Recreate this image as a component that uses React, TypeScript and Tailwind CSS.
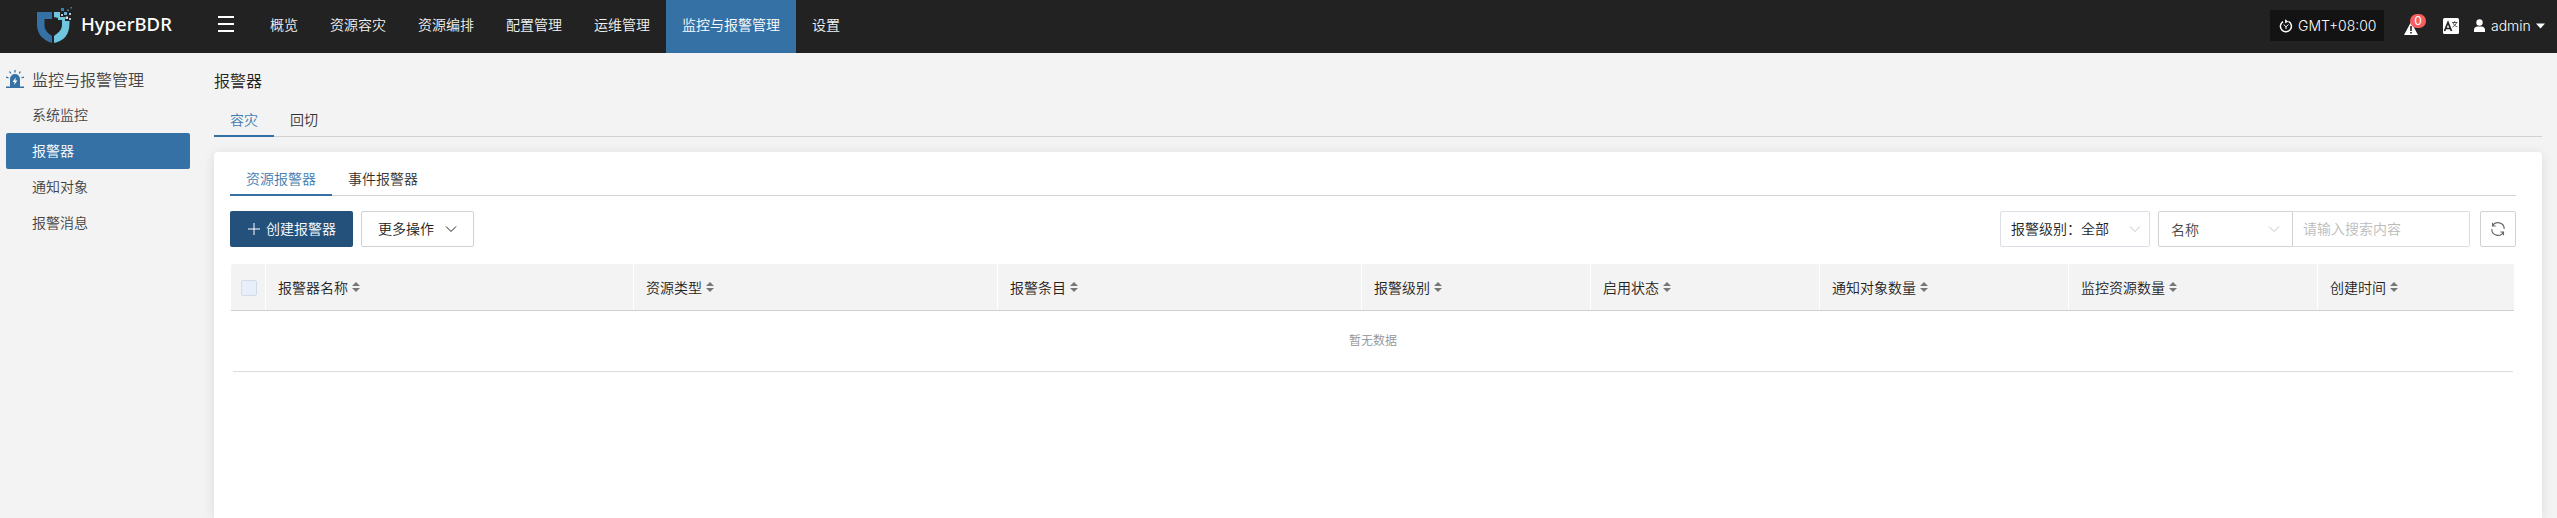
const NAV = ['概览', '资源容灾', '资源编排', '配置管理', '运维管理', '监控与报警管理', '设置'];
const SIDE = ['系统监控', '报警器', '通知对象', '报警消息'];

function Logo() {
  return (
    <svg width="36" height="38" viewBox="0 0 36 38" className="block shrink-0">
      <path d="M1 6h15v7H8.500v6c0 5 3 8 7.500 11v7C6 34 1 27 1 19z" fill="#3671a5" />
      <path d="M18 6h6v5h5v4h4.500v2c0 11-5 18-15.500 20v-7c4-3 8-6 8-11v-5h-4v-2l-4-1z" fill="#6ec7de" />
      <path d="M25 2h3v3h-3zM34.500 1h1.500v1.500h-1.500zM31 3.500h2V5h-2z" fill="#3f7fb5" />
      <path d="M28 6h3v3h-3z" fill="#6db3d8" />
      <path d="M33 7h2v2h-2zM33 12h2v2h-2zM25 8h2v2h-2z" fill="#a9cbe0" />
      <path d="M29.500 10.500h2.500v2.500h-2.500z" fill="#d8e6ef" />
    </svg>
  );
}

function Siren() {
  return (
    <svg width="18" height="18" viewBox="0 0 18 18" className="-mt-0.5 block shrink-0">
      <path d="M0 16.500h18v1.500H0zM4 16.500V9a5 5 0 0 1 10 0v7.500z" fill="#3671a5" />
      <path d="M9 0v2.500M3.500 1.500l1.400 2M14.500 1.500l-1.400 2M0 7l2.500.8M18 7l-2.500.8" stroke="#3671a5" strokeWidth="1.300" />
      <path d="M9.800 7.500 6.600 12h2l-.5 3 3.300-4.500H9.300z" fill="#fff" />
    </svg>
  );
}

function Chevron({ className }: { className: string }) {
  return (
    <svg width="12" height="12" viewBox="0 0 12 12" fill="none" stroke="currentColor" className={className}>
      <path d="M1 3.500 6 8.500l5-5" />
    </svg>
  );
}

function Sort() {
  return (
    <svg width="8" height="10" viewBox="0 0 8 10" fill="#777" className="ml-1 block shrink-0">
      <path d="M4 0l4 4H0zM4 10l4-4H0z" />
    </svg>
  );
}

function Header() {
  return (
    <header className="flex h-[53px] bg-[#222] text-white">
      <div className="flex w-[254px] shrink-0 items-start pl-9">
        <div className="mt-1.5">
          <Logo />
        </div>
        <span className="ml-[9px] mt-3 w-[94px] font-['Noto_Sans'] text-[18.500px] leading-6 font-[550] whitespace-nowrap">HyperBDR</span>
        <div className="mt-4 ml-[43px] flex w-4 flex-col gap-[5px]">
          <i className="h-0.5 bg-white" />
          <i className="h-0.5 bg-white" />
          <i className="h-0.5 bg-white" />
        </div>
      </div>
      <nav className="flex">
        {NAV.map((n) => (
          <a key={n} className={`px-4 leading-[50px] ${n === '监控与报警管理' ? 'bg-[#3671a5]' : 'text-[#f2f2f2]'}`}>
            {n}
          </a>
        ))}
      </nav>
      <div className="ml-auto flex items-start pr-3 font-normal">
        <div className="mt-2.5 flex h-[31px] w-[114px] items-center bg-[#131313] pl-[9px]">
          <svg width="14" height="14" viewBox="0 0 14 14" fill="none" stroke="#fff" className="shrink-0">
            <path d="M4 2.600a5.500 5.500 0 1 0 5.500-.2" strokeWidth="1.500" />
            <path d="M6 .3 9.300 2.400 6.300 4.600z" fill="#fff" stroke="none" />
            <path d="M4.700 5.500 7 7.800l2.500-2.300M7 7.800V10" strokeWidth="1" />
          </svg>
          <span className="ml-[5px] font-['Inter'] text-[14px] font-[350]">GMT+08:00</span>
        </div>
        <div className="relative mt-[22px] ml-5 h-[13px] w-[14px]">
          <svg width="14" height="13" viewBox="0 0 14 13" className="block">
            <path d="M7 0l7 13H0z" fill="#fff" />
            <path d="M7 4v5M7 10v1.500" stroke="#222" strokeWidth="1.600" />
          </svg>
          <span className="absolute -top-2 left-1.5 h-3.5 w-4 rounded-full bg-[#f85e61] text-center font-['Inter'] text-[12px] leading-[14px]">0</span>
        </div>
        <svg width="16" height="16" viewBox="0 0 16 16" className="mt-[18px] ml-[25px] block">
          <rect width="16" height="16" rx="1.500" fill="#fff" />
          <path d="M1.500 13 5 4.500 8.500 13M2.800 10.500h4.500" stroke="#222" strokeWidth="1.700" fill="none" />
          <path d="M9 4.500h5.500M11.700 3v1.500M13.500 4.500c-.5 2-2 3.500-4 4.500M10 4.500c.5 2 2 3.500 4.300 4.500" stroke="#333" strokeWidth=".8" fill="none" />
        </svg>
        <svg width="11" height="13" viewBox="0 0 11 13" fill="#fff" className="mt-[19px] ml-[15px] block">
          <circle cx="5.500" cy="3.500" r="3.200" />
          <path d="M0 13v-2c0-2 1.500-3.500 3.500-3.500h4c2 0 3.500 1.500 3.500 3.500v2z" />
        </svg>
        <span className="ml-1.5 w-[39px] font-['Inter'] text-[14px] leading-[52px] font-[350]">admin</span>
        <svg width="9" height="6" viewBox="0 0 9 6" className="mt-[23px] ml-1.5 block">
          <path d="M0 .5h9L4.500 5.500z" fill="#fff" />
        </svg>
      </div>
    </header>
  );
}

function Tabs({ items, className }: { items: string[]; className: string }) {
  return (
    <div className={`flex bg-[linear-gradient(#d2d2d2,#d2d2d2)] bg-[length:100%_1px] bg-bottom bg-no-repeat ${className}`}>
      {items.map((t, i) => (
        <a key={t} className={`h-full border-b-2 px-4 ${i === 0 ? 'border-[#3671a5] text-[#3f7cb0]' : 'border-transparent text-[#333]'}`}>
          {t}
        </a>
      ))}
    </div>
  );
}

function Toolbar() {
  return (
    <div className="mt-[15px] flex h-9">
      <button className="flex w-[123px] items-center rounded-[2px] bg-[#23517c] pb-px pl-[18px] text-white">
        <svg width="12" height="12" viewBox="0 0 12 12" stroke="#fff" className="mr-1.5">
          <path d="M6 0v12M0 6h12" />
        </svg>
        <span>创建报警器</span>
      </button>
      <button className="ml-2 flex w-[113px] items-center rounded-[2px] border border-[#d2d2d2] pb-px pl-4 text-[#222]">
        更多操作
        <Chevron className="ml-[11px]" />
      </button>
      <div className="ml-auto flex w-[150px] items-center justify-between rounded-[2px] border border-[#dcdfe6] pr-2 pb-px pl-2.5 text-[#222]">
        <span>
          报警级别：<span>全部</span>
        </span>
        <Chevron className="text-[#c0c4cc]" />
      </div>
      <div className="ml-2 flex w-[135px] items-center justify-between rounded-l-[2px] border border-[#d2d2d2] pr-3 pl-3 text-[#444]">
        名称
        <Chevron className="text-[#c0c4cc]" />
      </div>
      <div className="flex w-[177px] items-center rounded-r-[2px] border border-l-0 border-[#dcdcdc] pb-px pl-2.5 text-[#bbb]">请输入搜索内容</div>
      <div className="ml-2.5 flex w-9 items-center justify-center rounded-[2px] border border-[#d2d2d2]">
        <svg width="14" height="14" viewBox="0 0 14 14" fill="none" stroke="#666" strokeWidth="1.100">
          <path d="M1.500 4A6.200 6.200 0 0 1 13.200 7M12.500 10A6.200 6.200 0 0 1 .8 7M1.500.8V4h3.200M12.500 13.200V10H9.300" />
        </svg>
      </div>
    </div>
  );
}

const COLS: [string, string][] = [
  ['报警器名称', 'w-[368px]'],
  ['资源类型', 'w-[364px]'],
  ['报警条目', 'w-[364px]'],
  ['报警级别', 'w-[229px]'],
  ['启用状态', 'w-[229px]'],
  ['通知对象数量', 'w-[249px]'],
  ['监控资源数量', 'w-[249px]'],
  ['创建时间', 'w-[196px]'],
];

function Table() {
  return (
    <div className="mr-0.5 ml-px mt-[17px]">
      <div className="flex h-[47px] rounded-tl-[3px] border-b border-[#cfcfcf] bg-[#f3f3f3] text-[#222]">
        <div className="flex w-[35px] shrink-0 items-center border-r border-white pl-2.5">
          <span className="mt-0.5 size-4 rounded-[2px] border border-[#d3dae8] bg-[#e8effb]" />
        </div>
        {COLS.map(([name, width], i) => (
          <div key={name} className={`flex shrink-0 items-center pl-3 ${width} ${i < COLS.length - 1 ? 'border-r border-white' : ''}`}>
            {name}
            <Sort />
          </div>
        ))}
      </div>
      <div className="mr-px ml-0.5 h-[61px] border-b border-[#dcdcdc] text-center text-[12px] leading-[60px] text-[#909399]">暂无数据</div>
    </div>
  );
}

export default function App() {
  return (
    <div className="flex h-[518px] w-[2557px] flex-col overflow-hidden bg-[#f3f3f3] font-['Inter','Noto_Sans_CJK_SC',sans-serif] text-[14px] font-[350]">
      <Header />
      <div className="flex min-h-0 flex-1">
        <aside className="w-[214px] shrink-0 pl-1.5 text-[#444]">
          <div className="flex h-11 items-center pt-2.5">
            <Siren />
            <span className="ml-2 text-[16px]">监控与报警管理</span>
          </div>
          {SIDE.map((s) => (
            <div key={s} className={`h-9 w-[184px] rounded-[2px] pl-[26px] leading-9 ${s === '报警器' ? 'bg-[#3671a5] text-white' : ''}`}>
              {s}
            </div>
          ))}
        </aside>
        <main className="flex w-[2328px] flex-col">
          <h1 className="mt-4 text-[16px] leading-6 text-[#222]">报警器</h1>
          <Tabs items={['容灾', '回切']} className="mt-[11px] h-[33px] shrink-0 leading-8" />
          <section className="mt-[15px] flex-1 rounded-t-[4px] bg-white px-[16px] pt-2.5 pr-[26px] shadow-[0_2px_12px_rgba(0,0,0,0.1)]">
            <Tabs items={['资源报警器', '事件报警器']} className="h-[34px] leading-[34px]" />
            <Toolbar />
            <Table />
          </section>
        </main>
      </div>
    </div>
  );
}
